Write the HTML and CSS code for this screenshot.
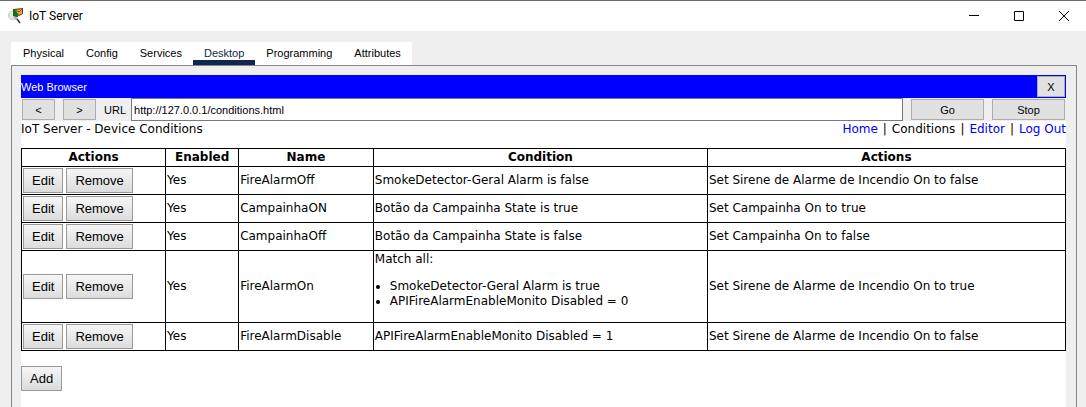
FILE: index.html
```html
<!DOCTYPE html>
<html lang="en">
<head>
<meta charset="utf-8">
<title>IoT Server</title>
<link rel="stylesheet" href="styles.css">
</head>
<body>
<div class="window">
  <header class="titlebar">
    <svg class="app-icon" viewBox="0 0 16 16" aria-hidden="true">
      <ellipse cx="5" cy="7.500" rx="5" ry="5" fill="#d3d6d1"/>
      <path d="M2 4 6 3v9L2 10z" fill="#e6e8e5"/>
      <path d="M5 1 15 0v6l-4 2-6-3z" fill="#5a4420"/>
      <path d="M7 2 14 1v5L9 7z" fill="#dca93f"/>
      <path d="M7 2 11 4 14 1" fill="none" stroke="#7b5a22"/>
      <path d="M5 3h3l2 3v3L8 9 5 8z" fill="#136b22"/>
      <path d="M5 9 10 10 8 12z" fill="#a9aea8"/>
      <path d="M9 11 12 15" stroke="#35373a" stroke-width="1.500"/>
    </svg>
    <span class="window-title">IoT Server</span>
    <div class="window-controls">
      <button type="button" aria-label="Minimize"><svg viewBox="0 0 10 10"><path d="M0 4.500H10"/></svg></button>
      <button type="button" aria-label="Maximize"><svg viewBox="0 0 10 10"><path d="M.5.5h9v9h-9z"/></svg></button>
      <button type="button" aria-label="Close"><svg viewBox="0 0 10 10"><path d="M0 0 10 10M10 0 0 10"/></svg></button>
    </div>
  </header>
  <nav class="tabs">
    <button type="button">Physical</button>
    <button type="button">Config</button>
    <button type="button">Services</button>
    <button type="button" class="active">Desktop</button>
    <button type="button">Programming</button>
    <button type="button">Attributes</button>
  </nav>
  <main class="pane">
    <div class="browser-title">
      <span>Web Browser</span>
      <button type="button" class="tool-button close-button" aria-label="Close browser">X</button>
    </div>
    <form class="toolbar">
      <button type="button" class="tool-button nav-button" aria-label="Back">&lt;</button>
      <button type="button" class="tool-button nav-button" aria-label="Forward">&gt;</button>
      <label for="url">URL</label>
      <input id="url" type="text" value="http://127.0.0.1/conditions.html">
      <button type="button" class="tool-button wide-button">Go</button>
      <button type="button" class="tool-button wide-button">Stop</button>
    </form>
    <section class="page">
      <div class="page-header">
        <span>IoT Server - Device Conditions</span>
        <nav class="page-links"><a href="#home">Home</a><span>|</span><span>Conditions</span><span>|</span><a href="#editor">Editor</a><span>|</span><a href="#logout">Log Out</a></nav>
      </div>
      <table class="conditions">
        <colgroup><col class="col-buttons"><col class="col-enabled"><col class="col-name"><col class="col-condition"><col></colgroup>
        <thead>
          <tr><th>Actions</th><th>Enabled</th><th>Name</th><th>Condition</th><th>Actions</th></tr>
        </thead>
        <tbody>
          <tr>
            <td><div class="row-buttons"><button type="button" class="page-button">Edit</button><button type="button" class="page-button">Remove</button></div></td>
            <td>Yes</td><td>FireAlarmOff</td><td>SmokeDetector-Geral Alarm is false</td><td>Set Sirene de Alarme de Incendio On to false</td>
          </tr>
          <tr>
            <td><div class="row-buttons"><button type="button" class="page-button">Edit</button><button type="button" class="page-button">Remove</button></div></td>
            <td>Yes</td><td>CampainhaON</td><td>Botão da Campainha State is true</td><td>Set Campainha On to true</td>
          </tr>
          <tr>
            <td><div class="row-buttons"><button type="button" class="page-button">Edit</button><button type="button" class="page-button">Remove</button></div></td>
            <td>Yes</td><td>CampainhaOff</td><td>Botão da Campainha State is false</td><td>Set Campainha On to false</td>
          </tr>
          <tr>
            <td><div class="row-buttons"><button type="button" class="page-button">Edit</button><button type="button" class="page-button">Remove</button></div></td>
            <td>Yes</td><td>FireAlarmOn</td>
            <td>Match all:
              <ul>
                <li>SmokeDetector-Geral Alarm is true</li>
                <li>APIFireAlarmEnableMonito Disabled = 0</li>
              </ul>
            </td>
            <td>Set Sirene de Alarme de Incendio On to true</td>
          </tr>
          <tr>
            <td><div class="row-buttons"><button type="button" class="page-button">Edit</button><button type="button" class="page-button">Remove</button></div></td>
            <td>Yes</td><td>FireAlarmDisable</td><td>APIFireAlarmEnableMonito Disabled = 1</td><td>Set Sirene de Alarme de Incendio On to false</td>
          </tr>
        </tbody>
      </table>
      <button type="button" class="page-button">Add</button>
    </section>
  </main>
</div>
</body>
</html>
```
FILE: styles.css
```css
* {
  box-sizing: border-box;
}

body {
  margin: 0;
  background: #efefef;
  color: #000;
  font: 11px/16px "Liberation Sans", Arial, sans-serif;
}

button,
input {
  margin: 0;
  font: inherit;
  color: inherit;
}

.window {
  display: flex;
  flex-direction: column;
  min-height: 100vh;
  border-top: 1px solid #6b6b6b;
}

.titlebar {
  display: flex;
  align-items: center;
  height: 30px;
  padding-left: 8px;
  background: #fff;
}

.app-icon {
  width: 16px;
  height: 16px;
}

.window-title {
  margin-left: 5px;
  font: 12px/16px Roboto, sans-serif;
}

.window-controls {
  display: flex;
  align-self: stretch;
  margin-left: auto;
}

.window-controls button {
  display: grid;
  place-items: center;
  width: 45px;
  padding: 0;
  border: 0;
  background: none;
}

.window-controls svg {
  width: 10px;
  height: 10px;
  fill: none;
  stroke: #000;
  overflow: visible;
}

.tabs {
  display: flex;
  align-self: flex-start;
  margin: 11px 11px 0;
  padding-left: 1px;
  background: #fff;
}

.tabs button {
  height: 23px;
  padding: 3px 11px 0;
  border: 0;
  border-bottom: 5px solid transparent;
  background: none;
}

.tabs .active {
  border-bottom-color: #0d274d;
  color: #0d274d;
}

.pane {
  display: flex;
  flex: 1;
  flex-direction: column;
  margin: 0 9px 0 11px;
  padding: 9px 10px 0 9px;
  border: 1px solid #828790;
  border-bottom: 0;
}

.browser-title {
  display: flex;
  align-items: center;
  justify-content: space-between;
  height: 23px;
  padding-right: 1px;
  background: #00f;
  color: #fff;
}

.tool-button {
  height: 21px;
  padding: 0;
  border: 1px solid #adadad;
  background: #e1e1e1;
  color: #000;
}

.close-button {
  width: 28px;
}

.toolbar {
  display: flex;
  align-items: center;
  height: 23px;
  padding: 0 1px;
}

.nav-button {
  width: 33px;
  margin-right: 8px;
}

.toolbar label {
  margin-right: 5px;
}

.toolbar input {
  flex: 1;
  min-width: 0;
  height: 23px;
  padding: 0 2px;
  border: 1px solid #7a7a7a;
  background: #fff;
}

.wide-button {
  width: 73px;
  margin-left: 8px;
}

.page {
  flex: 1;
  padding: 1px 0 16px;
  background: #fff;
  font: 12px/15px "DejaVu Sans", Verdana, sans-serif;
}

.page-header {
  display: flex;
  justify-content: space-between;
}

.page-links {
  display: flex;
  gap: 5px;
}

.page a {
  color: #00f;
  text-decoration: none;
}

.conditions {
  width: 100%;
  margin: 11px 0 15px;
  border-collapse: collapse;
  table-layout: fixed;
}

.conditions th,
.conditions td {
  padding: 1px;
  border: 1px solid #000;
  text-align: left;
}

.conditions th {
  text-align: center;
}

.col-buttons { width: 13.8%; }
.col-enabled { width: 7%; }
.col-name { width: 12.9%; }
.col-condition { width: 32%; }

.conditions ul {
  margin: 12px 0;
  padding-left: 15px;
}

.row-buttons {
  display: flex;
  gap: 3px;
}

.page-button {
  height: 25px;
  padding: 0 8px;
  border: 1px solid #999;
  background: linear-gradient(#f6f6f6, #dcdcdc);
  font: 13px/17px "Liberation Sans", Arial, sans-serif;
}
```
